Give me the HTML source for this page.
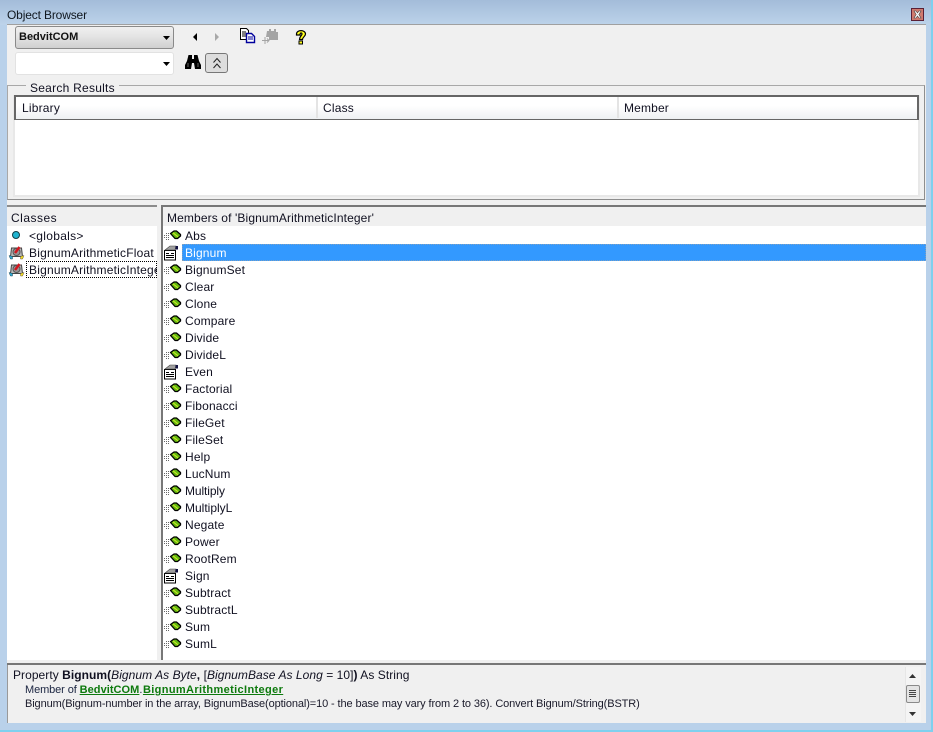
<!DOCTYPE html>
<html><head><meta charset="utf-8"><style>
html,body{margin:0;padding:0}
body{width:933px;height:732px;overflow:hidden;position:relative;background:#b9d1ea;font-family:"Liberation Sans",Arial,sans-serif;font-size:12px;color:#101020}
div,span.a{position:absolute;box-sizing:border-box}
.t{white-space:nowrap;line-height:14px;letter-spacing:.2px}
svg{position:absolute;overflow:visible}
.r{left:185px;white-space:nowrap;line-height:14px;letter-spacing:.15px;position:absolute}
</style></head><body>
<svg width="0" height="0" style="position:absolute"><defs>
<g id="m"><path d="M0 6.500h6M0 8.500h6M2 4.500h3M2 10.500h3" stroke="#666" stroke-width="1" stroke-dasharray="1 1" fill="none"/><path d="M6.500 4.500 10 2h2.500L16.500 5.500v1.500L13.500 9.500H11z" fill="#62b810" stroke="#000" stroke-width="1.300" stroke-linejoin="round"/><path d="M9 3.800l5 4" stroke="#d0e828" stroke-width="1"/></g>
<g id="p"><path d="M1.500 5.500h11v9.500h-11z" fill="#fff" stroke="#000"/><path d="M3 8.500h3M8 8.500h3M3 10.500h8M3 12.500h8" stroke="#000"/><path d="M2 5 7 1h6l-1 4z" fill="#a0a0a0" stroke="#444" stroke-width=".6"/><path d="M12.500 1h2.500v3.500h-2.500z" fill="#101040"/></g>
<g id="c"><path d="M2.500 3h10l1 8.500H1.500z" fill="#b8b8b8" stroke="#444"/><circle cx="7.500" cy="7" r="3.500" fill="#999" stroke="#555"/><path d="M6 8 10.500 2" stroke="#d01820" stroke-width="2.600"/><path d="M0 10.500l3.500 1v2.500H1.500z" fill="#30b0d8" stroke="#245" stroke-width=".5"/><path d="M15 10.500l-3.500 1v2.500H13.500z" fill="#f4e020" stroke="#654" stroke-width=".5"/></g>
</defs></svg>

<div style="left:0;top:0;width:933px;height:25px;background:linear-gradient(#a3bcd9,#bdd3ea)"></div>
<div style="left:0;top:730px;width:933px;height:2px;background:#7fd0ee"></div>
<div style="left:931px;top:0;width:2px;height:732px;background:#7fd0ee"></div>
<div class="t" style="left:7px;top:8px;color:#101820;letter-spacing:-.15px">Object Browser</div>
<div style="left:911px;top:8px;width:13px;height:13px;background:#cf7a6e;border:1px solid #5a2035"></div>
<svg style="left:913px;top:10px" width="9" height="9"><path d="M1 1h2l1.500 2L6 1h2L5.800 4.500 8 8H6L4.500 6 3 8H1l2.200-3.500z" fill="#fff" stroke="#444" stroke-width=".6"/></svg>

<!-- main panel -->
<div style="left:7px;top:24px;width:919px;height:699px;background:#f0f0f0;border-top:1px solid #a0a0a0"></div>

<!-- combo 1 -->
<div style="left:15px;top:26px;width:159px;height:23px;border:1px solid #8a8a8a;border-radius:3px;background:linear-gradient(#f0f0f0,#e4e4e4 45%,#cfcfcf)"></div>
<div class="t" style="left:19px;top:30px;font-weight:bold;font-size:11px;letter-spacing:0;color:#111">BedvitCOM</div>
<svg style="left:162px;top:35px" width="9" height="6"><path d="M1 1h7L4.500 5z" fill="#000"/></svg>
<!-- combo 2 -->
<div style="left:15px;top:52px;width:159px;height:23px;border:1px solid #e2e2e2;border-radius:3px;background:#fff"></div>
<svg style="left:162px;top:61px" width="9" height="6"><path d="M1 1h7L4.500 5z" fill="#000"/></svg>

<!-- toolbar -->
<svg style="left:192px;top:33px" width="6" height="8"><path d="M5 0v8L1 4z" fill="#000"/></svg>
<svg style="left:215px;top:33px" width="6" height="8"><path d="M0 0v8l4-4z" fill="#a8a8a8"/></svg>
<svg style="left:240px;top:28px" width="16" height="16"><path d="M.5.500h6l2 2v9h-8z" fill="#fff" stroke="#000"/><path d="M2 4h4M2 6h4M2 8h4" stroke="#000"/><path d="M6.500 5.500h5l3 3v6h-8z" fill="#fff" stroke="#00009c" stroke-width="1.400"/><path d="M8 9h5M8 11h5" stroke="#00009c"/></svg>
<svg style="left:262px;top:28px" width="16" height="16"><path d="M5 3h2V1h2v2h3V1h2v3h2v8H7V9H4z" fill="#a4a4a4"/><path d="M0 12.500h7M5 10.500l2 2-2 2M3 9v7" stroke="#a4a4a4" fill="none"/></svg>
<svg style="left:295px;top:29px" width="12" height="16"><path d="M1.500 5C1.500.5 10.500.5 10.500 5c0 2.500-3 3-3 5.500H4.500C4.500 7.500 7 6.500 7 5S5 3.500 5 6H1.500z" fill="#ffff20" stroke="#000" stroke-width="1.200"/><rect x="4" y="12" width="3.500" height="3" fill="#ffff20" stroke="#000"/></svg>
<svg style="left:185px;top:54px" width="16" height="16"><path d="M3.500 1H7V5H9V1h3.500L14 7l2 4v4H10L9 9H7L6 15H0V11L2 7z" fill="#000"/><path d="M3 9v4M13 9v4" stroke="#666"/></svg>
<div style="left:205px;top:53px;width:23px;height:20px;border:1px solid #777;border-radius:3px;background:#ddd"></div>
<svg style="left:212px;top:57px" width="10" height="12"><path d="M1.500 5.500l3.500-4 3.500 4M1.500 11l3.500-4 3.500 4" stroke="#222" fill="none"/></svg>

<!-- search results group -->
<div style="left:7px;top:85px;width:918px;height:115px;border:1px solid #a8a8a8;border-right-color:#8e8e8e;border-bottom-color:#8e8e8e"></div>
<div class="t" style="left:26px;top:81px;padding:0 4px;background:#f0f0f0;letter-spacing:.25px">Search Results</div>
<div style="left:13px;top:95px;width:907px;height:102px;background:#fff;border:2px solid #e8e8e8;border-top:0"></div>
<div style="left:14px;top:95px;width:905px;height:25px;border:2px solid #666;border-bottom-width:1.500px;background:linear-gradient(#fff 40%,#eef0f3)"></div>
<div style="left:316px;top:97px;width:2px;height:21px;background:#e4e4e4"></div>
<div style="left:617px;top:97px;width:2px;height:21px;background:#e4e4e4"></div>
<div class="t" style="left:22px;top:101px">Library</div>
<div class="t" style="left:323px;top:101px">Class</div>
<div class="t" style="left:624px;top:101px;letter-spacing:.15px">Member</div>

<!-- splitter -->
<div style="left:7px;top:205px;width:150px;height:2px;background:#8c8c8c"></div>
<div style="left:161px;top:205px;width:765px;height:2px;background:#777"></div>

<!-- classes -->
<div style="left:7px;top:207px;width:150px;height:453px;background:#fff"></div>
<div style="left:7px;top:207px;width:150px;height:19px;background:#f0f0f0"></div>
<div class="t" style="left:11px;top:211px;letter-spacing:.5px">Classes</div>
<div style="left:12px;top:231px;width:8px;height:8px;border-radius:50%;background:#20b4d0;border:1px solid #104048"></div>
<div class="t" style="left:29px;top:229px;letter-spacing:.3px">&lt;globals&gt;</div>
<svg style="left:9px;top:245px" width="16" height="16"><use href="#c"/></svg>
<div class="t" style="left:29px;top:246px">BignumArithmeticFloat</div>
<svg style="left:9px;top:262px" width="16" height="16"><use href="#c"/></svg>
<div style="left:26px;top:261px;width:131px;height:17px;border:1px dotted #000"></div>
<div style="left:29px;top:263px;width:128px;height:14px;overflow:hidden"><span class="t" style="position:absolute;left:0;top:0">BignumArithmeticInteger</span></div>

<!-- vertical splitter -->
<div style="left:161px;top:205px;width:2px;height:455px;background:#777"></div>

<!-- members -->
<div style="left:163px;top:207px;width:763px;height:453px;background:#fff"></div>
<div style="left:163px;top:207px;width:763px;height:19px;background:#f0f0f0"></div>
<div class="t" style="left:167px;top:211px;letter-spacing:.12px">Members of 'BignumArithmeticInteger'</div>
<div style="left:182px;top:244px;width:744px;height:17px;background:#3399ff;border:1px dotted #7ea0c0"></div>
<div style="left:163px;top:226px;width:763px;height:434px">
<svg style="left:1px;top:3px" width="17" height="12"><use href="#m"/></svg><span class="r" style="left:22px;top:3px">Abs</span>
<svg style="left:0;top:19px" width="17" height="17"><use href="#p"/></svg><span class="r" style="left:22px;top:20px;color:#fff">Bignum</span>
<svg style="left:1px;top:37px" width="17" height="12"><use href="#m"/></svg><span class="r" style="left:22px;top:37px">BignumSet</span>
<svg style="left:1px;top:54px" width="17" height="12"><use href="#m"/></svg><span class="r" style="left:22px;top:54px">Clear</span>
<svg style="left:1px;top:71px" width="17" height="12"><use href="#m"/></svg><span class="r" style="left:22px;top:71px">Clone</span>
<svg style="left:1px;top:88px" width="17" height="12"><use href="#m"/></svg><span class="r" style="left:22px;top:88px">Compare</span>
<svg style="left:1px;top:105px" width="17" height="12"><use href="#m"/></svg><span class="r" style="left:22px;top:105px">Divide</span>
<svg style="left:1px;top:122px" width="17" height="12"><use href="#m"/></svg><span class="r" style="left:22px;top:122px">DivideL</span>
<svg style="left:0;top:138px" width="17" height="17"><use href="#p"/></svg><span class="r" style="left:22px;top:139px">Even</span>
<svg style="left:1px;top:156px" width="17" height="12"><use href="#m"/></svg><span class="r" style="left:22px;top:156px">Factorial</span>
<svg style="left:1px;top:173px" width="17" height="12"><use href="#m"/></svg><span class="r" style="left:22px;top:173px">Fibonacci</span>
<svg style="left:1px;top:190px" width="17" height="12"><use href="#m"/></svg><span class="r" style="left:22px;top:190px">FileGet</span>
<svg style="left:1px;top:207px" width="17" height="12"><use href="#m"/></svg><span class="r" style="left:22px;top:207px">FileSet</span>
<svg style="left:1px;top:224px" width="17" height="12"><use href="#m"/></svg><span class="r" style="left:22px;top:224px">Help</span>
<svg style="left:1px;top:241px" width="17" height="12"><use href="#m"/></svg><span class="r" style="left:22px;top:241px">LucNum</span>
<svg style="left:1px;top:258px" width="17" height="12"><use href="#m"/></svg><span class="r" style="left:22px;top:258px;letter-spacing:-.1px">Multiply</span>
<svg style="left:1px;top:275px" width="17" height="12"><use href="#m"/></svg><span class="r" style="left:22px;top:275px;letter-spacing:0">MultiplyL</span>
<svg style="left:1px;top:292px" width="17" height="12"><use href="#m"/></svg><span class="r" style="left:22px;top:292px">Negate</span>
<svg style="left:1px;top:309px" width="17" height="12"><use href="#m"/></svg><span class="r" style="left:22px;top:309px">Power</span>
<svg style="left:1px;top:326px" width="17" height="12"><use href="#m"/></svg><span class="r" style="left:22px;top:326px">RootRem</span>
<svg style="left:0;top:342px" width="17" height="17"><use href="#p"/></svg><span class="r" style="left:22px;top:343px">Sign</span>
<svg style="left:1px;top:360px" width="17" height="12"><use href="#m"/></svg><span class="r" style="left:22px;top:360px">Subtract</span>
<svg style="left:1px;top:377px" width="17" height="12"><use href="#m"/></svg><span class="r" style="left:22px;top:377px">SubtractL</span>
<svg style="left:1px;top:394px" width="17" height="12"><use href="#m"/></svg><span class="r" style="left:22px;top:394px">Sum</span>
<svg style="left:1px;top:411px" width="17" height="12"><use href="#m"/></svg><span class="r" style="left:22px;top:411px">SumL</span>
</div>

<!-- bottom details -->
<div style="left:7px;top:660px;width:919px;height:3px;background:#f0f0f0"></div>
<div style="left:7px;top:663px;width:919px;height:2px;background:#777"></div>
<div style="left:7px;top:665px;width:919px;height:58px;background:#f0f0f0;border-left:1px solid #999"></div>
<div class="t" style="left:13px;top:668px;letter-spacing:.05px">Property <b>Bignum(</b><i>Bignum As Byte</i><b>,</b> [<i>BignumBase As Long</i> = 10]<b>)</b> As String</div>
<div class="t" style="left:25px;top:683px;font-size:11px;letter-spacing:-.1px;color:#1a2440">Member of <b style="color:#0d7a0d;text-decoration:underline;letter-spacing:.05px">BedvitCOM</b><span style="letter-spacing:.5px">.</span><b style="color:#0d7a0d;text-decoration:underline;letter-spacing:.36px">BignumArithmeticInteger</b></div>
<div class="t" style="left:25px;top:697px;font-size:11px;letter-spacing:-.11px;color:#1a1a2a">Bignum(Bignum-number in the array, BignumBase(optional)=10 - the base may vary from 2 to 36). Convert Bignum/String(BSTR)</div>
<!-- scrollbar -->
<div style="left:905px;top:667px;width:16px;height:55px;background:#f4f4f4;border-left:1px solid #e6e6e6"></div>
<svg style="left:908px;top:673px" width="9" height="6"><path d="M1 5h7L4.500 1z" fill="#333"/></svg>
<svg style="left:908px;top:711px" width="9" height="6"><path d="M1 1h7L4.500 5z" fill="#333"/></svg>
<div style="left:906px;top:685px;width:14px;height:18px;border:1px solid #8a8a8a;border-radius:2px;background:#e4e4e4"></div>
<svg style="left:909px;top:690px" width="8" height="8"><path d="M0 .500h7M0 2.500h7M0 4.500h7M0 6.500h7" stroke="#444"/></svg>
</body></html>
